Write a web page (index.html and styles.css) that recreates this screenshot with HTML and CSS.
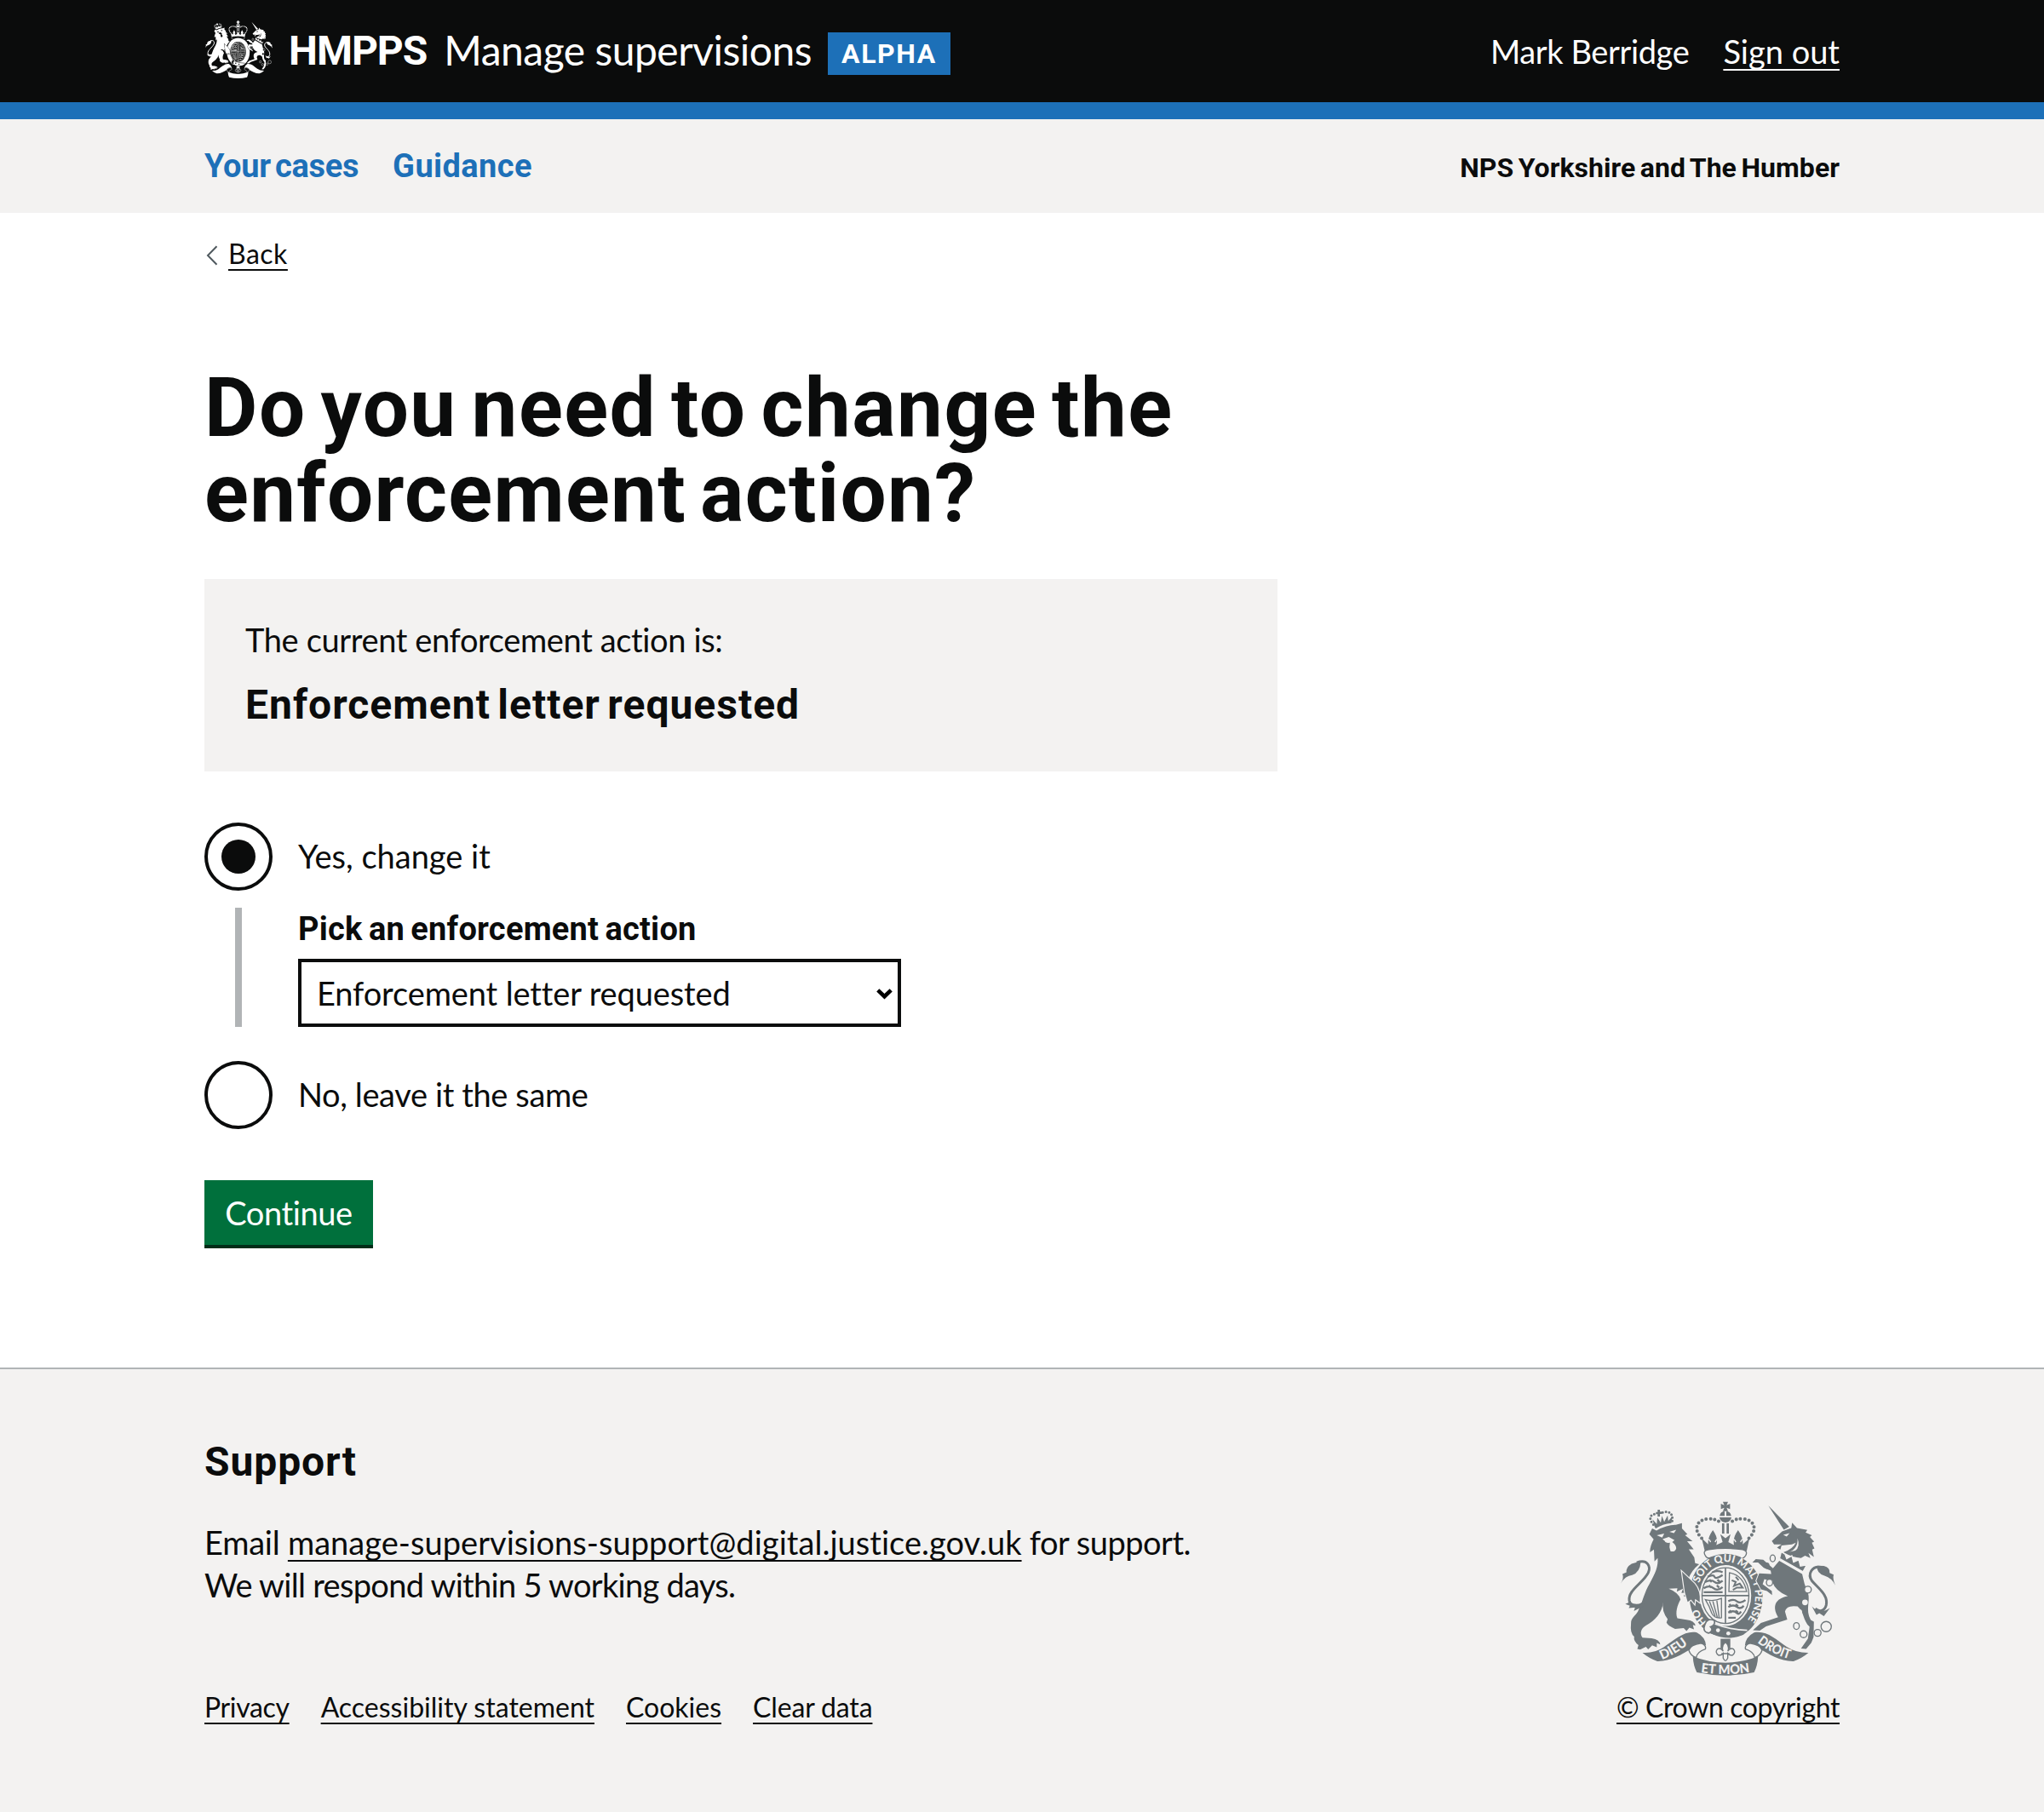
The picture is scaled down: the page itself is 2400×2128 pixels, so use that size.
FILE: index.html
```
<!DOCTYPE html>
<html lang="en">
<head>
<meta charset="utf-8">
<title>Do you need to change the enforcement action? - Manage supervisions</title>
<link rel="stylesheet" href="styles.css">
</head>
<body>
<svg class="defs" aria-hidden="true">
  <defs>
    <path id="ring-left" d="M373 496 A106 124 0 0 1 334 410"/>
    <path id="ring-top" d="M346 358 A103 119 0 0 1 440 283 A103 120 0 0 1 542 402 A103 122 0 0 1 494 508"/>
    <path id="scroll-left" d="M216 627 Q266 608 316 566"/>
    <path id="scroll-mid" d="M352 672 Q438 685 524 671"/>
    <path id="scroll-right" d="M549 567 Q603 610 668 627"/>
    <symbol id="crest" viewBox="72 70 750 614" preserveAspectRatio="none">
      <!-- lion's crown -->
      <g class="ink">
        <path d="M190 158 L183 134 L198 150 L200 128 L212 146 L216 122 L224 143 L236 120 L238 140 L252 124 L249 147 Q218 150 194 166Z"/>
        <path d="M201 100 h8 v7 h7 v8 h-7 v9 h-8 v-8 h-6 v-8 h6z"/>
      </g>
      <path class="beads" d="M186 152 C166 128 178 114 196 116 M252 140 C256 112 240 102 218 110" stroke-width="9" stroke-dasharray="0 11.5"/>
      <!-- lion -->
      <path class="ink" d="M172 186 L182 166 L197 173 Q235 152 265 153 L286 147 L286 166 L305 186 L297 190 L323 211 L304 211 L327 239 L310 239 L329 268 L332 288 L346 292 Q318 315 308 345 L334 372 L330 431 L318 416 L306 424 L303 408 L292 404 L298 392 L284 393 L290 378 L268 388 L270 376 L240 378 Q275 392 281 416 C270 435 262 462 270 482 L302 487 Q330 490 333 508 L324 505 L328 521 L312 515 L302 527 L292 516 L262 519 Q236 508 232 497 L236 485 Q214 455 220 424 C218 462 190 492 160 507 C142 518 138 535 148 550 L180 552 Q208 556 210 574 L198 569 L198 584 L182 577 L168 591 L160 582 L140 592 L130 590 L134 576 Q116 562 119 546 Q104 535 108 500 C108 480 120 478 132 458 C150 420 155 390 173 360 C192 325 204 300 201 270 L190 282 L188 240 L174 250 C174 232 180 218 187 204Z"/>
      <path class="paper" d="M198 190 L224 184 L217 198Z M242 178 L266 170 L258 182Z M218 203 L240 196 L260 207 L252 214 Q266 224 266 236 Q262 250 246 246 Q240 230 244 216 Q228 218 226 210Z"/>
      <path class="ink" d="M72 360 Q84 340 78 326 L92 320 Q90 302 110 290 Q125 286 142 282 Q140 320 112 330 Q88 332 72 360Z"/>
      <path class="line" d="M128 286 C166 272 178 300 168 322 C150 358 96 384 102 420 C108 446 140 446 160 424" stroke-width="9"/>
      <path class="ink" d="M88 432 L104 424 Q135 444 162 412 L150 440 L118 456 L122 444 L100 446 L104 438Z"/>
      <!-- royal crown -->
      <g class="ink">
        <path d="M429 72 h18 l-5 12 l12 -5 v19 l-12 -5 l5 12 h-18 l5 -12 l-12 5 v-19 l12 5z"/>
        <path d="M418 122 Q420 106 435 105 V122Z M441 105 Q456 106 458 122 H441Z M417 127 H459 Q456 143 438 145 Q420 143 417 127Z"/>
        <path d="M426 148 h8 v36 h-8z M442 148 h8 v36 h-8z"/>
        <path d="M355 200 L378 222 Q374 200 394 172 Q414 200 406 224 L428 214 L420 186 L438 200 L456 186 L448 214 L468 224 Q462 200 482 172 Q502 200 498 222 L522 200 L512 246 Q438 226 366 246Z"/>
      </g>
      <path class="rule" d="M372 206 q10 -6 14 8 M416 206 q-10 -6 -14 8 M460 206 q10 -6 14 8 M505 206 q-10 -6 -14 8" stroke-width="4"/>
      <path class="beads" d="M355 200 C326 172 334 138 374 132 Q404 130 418 144 M520 200 C550 172 542 138 502 132 Q472 130 458 144" stroke-width="12" stroke-dasharray="0 15"/>
      <!-- garter -->
      <path class="ink" d="M438 255 C510 255 568 320 568 402 C568 485 520 551 452 551 C370 551 312 485 312 402 C312 320 366 255 438 255Z"/>
      <path class="fold" d="M368 262 Q356 244 380 240 Q438 232 498 240 Q518 246 508 262 Q498 276 490 268 Q438 246 386 268 Q374 274 368 262Z" stroke-width="4"/>
      <ellipse class="paper" cx="438" cy="402" rx="90" ry="107"/>
      <g class="motto"><text><textPath href="#ring-left" textLength="58">HO</textPath></text><text><textPath href="#ring-top" textLength="392" lengthAdjust="spacingAndGlyphs">SOIT QUI MAL Y PENSE</textPath></text></g>
      <path class="limb" d="M286 318 L330 360 Q352 386 348 426 L332 414 L330 431 L318 416 L306 424 L296 390Z" stroke-width="7"/>
      <!-- unicorn -->
      <path class="ink" d="M588 86 L661 160 L642 170Z M600 210 L636 176 L668 164 L671 146 L688 164 L724 171 L718 180 L740 190 L733 196 L748 212 L740 216 L749 236 L741 240 L747 266 L728 252 L735 270 L716 262 L702 270 Q672 268 640 250 Q674 238 684 216 L670 222 L634 226 L630 240 L618 233 L634 222 L608 222Z"/>
      <path class="paper" d="M640 188 L662 182 L652 194Z M690 200 Q692 240 656 250 L682 244 Q700 230 690 200Z"/>
      <path class="limb" d="M626 280 L706 326 Q712 360 726 392 C736 420 716 452 736 488 L747 494 L746 548 L738 568 L720 590 L702 588 L726 554 L732 512 C708 490 714 460 690 440 Q652 434 646 458 L654 486 L580 510 L558 525 L534 524 L562 498 L622 478 C600 440 612 412 656 404 Q612 386 602 354 L574 344 L568 362 L600 386 L601 400 L583 386 L562 380 L546 350 L556 324 L598 326 L596 314 L572 304 L552 286 L532 286 L544 274 L570 276 L604 306Z" stroke-width="6"/>
      <path class="collar" d="M633 248 L646 256 L652 272 L670 262 L676 284 L694 276 L700 298 L722 294 L709 318 L627 272Z" stroke-width="4"/>
      <path class="ink" d="M822 366 Q812 342 816 328 L802 322 Q804 304 782 298 L758 297 Q756 324 784 332 Q810 340 822 366Z"/>
      <path class="line" d="M772 302 C740 296 724 326 740 350 C764 378 798 400 790 436 C784 458 766 460 752 448" stroke-width="9"/>
      <path class="ink" d="M740 440 Q768 470 803 446 L782 474 L766 464 L756 470Z"/>
      <g class="paper"><circle cx="726" cy="381" r="12"/><circle cx="716" cy="426" r="10"/><circle cx="695" cy="461" r="11"/><circle cx="592" cy="356" r="12"/></g>
      <g class="line" stroke-width="4"><ellipse cx="603" cy="271" rx="9" ry="12"/><ellipse cx="583" cy="297" rx="7" ry="9"/><ellipse cx="592" cy="356" rx="11" ry="12"/><circle cx="726" cy="381" r="12"/><ellipse cx="686" cy="509" rx="10" ry="12"/><circle cx="711" cy="538" r="12"/><circle cx="760" cy="533" r="12"/><circle cx="790" cy="511" r="18"/></g>
      <!-- shield -->
      <g class="line" stroke-width="4">
        <ellipse cx="438" cy="402" rx="82" ry="98"/>
        <path d="M438 304 V500 M356 402 H520" stroke-width="5"/>
        <path d="M376 336 q20 -10 24 0 t28 -6 M366 354 q22 -10 34 0 t28 -4 M362 376 q20 -12 34 0 t32 -4 M392 320 q20 -8 36 0 M382 346 l8 8 m20 -8 l8 8 M380 366 l8 8 m20 -8 l8 8 M362 390 h66" stroke-width="7"/>
        <path d="M448 422 q18 -10 30 0 t30 -4 M448 442 q18 -10 30 0 t24 -4 M448 462 q18 -10 28 0 t16 -4 M452 432 l6 8 m16 -8 l8 8 m-30 14 l8 8 m14 -8 l8 8 M448 480 h26" stroke-width="7"/>
        <path d="M452 322 Q500 330 512 388 H450Z"/>
        <path d="M460 348 l14 6 l-6 14 l20 -8 l10 14 l-20 0 l-14 8 M474 336 l10 12" stroke-width="6"/>
        <path d="M368 416 Q396 424 424 412 V480 Q400 484 390 464 Q382 438 368 416Z M382 422 L402 474 M394 422 L410 480 M408 420 L416 480"/>
      </g>
      <path class="ink" d="M376 508 Q430 530 512 528 L500 540 Q440 560 372 530Z"/>
      <path class="rule" d="M396 500 Q450 522 514 524" stroke-width="5"/>
      <g class="paper"><circle cx="412" cy="524" r="7"/><circle cx="448" cy="535" r="7"/></g>
      <path class="fold" d="M400 490 Q374 478 366 504 Q356 530 380 534 Q398 524 386 512 Q402 508 400 490Z" stroke-width="5"/>
      <!-- scroll -->
      <g class="ink">
        <path d="M148 603 Q190 606 222 584 C262 556 296 524 338 532 Q368 548 370 578 L352 570 Q326 572 322 586 C285 610 245 634 200 633 Q170 622 148 603Z"/>
        <path d="M728 603 Q686 604 652 582 C614 556 582 524 538 532 Q508 548 506 578 L524 570 Q548 572 554 586 C592 610 630 634 676 633 Q706 622 728 603Z"/>
        <path d="M324 616 Q380 638 438 638 Q496 638 552 616 Q550 650 538 672 Q438 694 338 672 Q326 650 324 616Z"/>
        <path d="M421 554 h34 v34 h-34z"/>
      </g>
      <path class="fold" d="M352 570 Q372 576 368 590 Q338 600 336 620 Q316 614 310 594 Q316 576 352 570Z M524 570 Q504 576 508 590 Q538 600 540 620 Q560 614 566 594 Q560 576 524 570Z" stroke-width="4"/>
      <path class="fold" d="M438 566 Q454 580 446 598 Q454 584 466 590 Q476 602 462 612 Q450 612 446 606 L446 622 Q438 640 430 622 L430 606 Q426 612 414 612 Q400 602 410 590 Q422 584 430 598 Q422 580 438 566Z M424 606 H452" stroke-width="4"/>
      <g class="words"><text><textPath href="#scroll-left" textLength="106" lengthAdjust="spacingAndGlyphs">DIEU</textPath></text><text><textPath href="#scroll-mid" textLength="172" lengthAdjust="spacingAndGlyphs">ET MON</textPath></text><text><textPath href="#scroll-right" textLength="126" lengthAdjust="spacingAndGlyphs">DROIT</textPath></text></g>
    </symbol>
  </defs>
</svg>

<header class="header">
  <div class="container header-row">
    <a class="brand" href="#">
      <svg class="crest-small" aria-hidden="true"><use href="#crest"/></svg>
      <strong class="org">HMPPS</strong>
      <span class="service">Manage supervisions</span>
      <strong class="phase">ALPHA</strong>
    </a>
    <div class="user">
      <span class="user-name">Mark Berridge</span>
      <a class="link" href="#">Sign out</a>
    </div>
  </div>
</header>

<nav class="primary-nav">
  <div class="container nav-row">
    <div class="nav-links">
      <a class="nav-cases" href="#">Your cases</a>
      <a class="nav-guidance" href="#">Guidance</a>
    </div>
    <strong class="region">NPS Yorkshire and The Humber</strong>
  </div>
</nav>

<main class="container main">
  <div class="back">
    <svg class="back-icon" viewBox="0 0 14 24" aria-hidden="true"><path d="M12.5 1.2 L2 12 L12.5 22.8"/></svg>
    <a class="link back-link" href="#">Back</a>
  </div>
  <h1 class="title"><span class="title-first">Do you need to change the</span> <span class="title-second">enforcement action?</span></h1>
  <section class="panel">
    <p class="panel-lead">The current enforcement action is:</p>
    <p class="panel-value">Enforcement letter requested</p>
  </section>
  <form class="form">
    <div class="choice">
      <span class="radio radio-checked"></span>
      <label class="choice-label">Yes, change it</label>
    </div>
    <div class="conditional">
      <label class="field-label" for="action">Pick an enforcement action</label>
      <div class="select-wrap">
        <select class="select" id="action"><option>Enforcement letter requested</option></select>
        <svg class="select-icon" viewBox="0 0 19 13" aria-hidden="true"><path d="M1.8 1.8 L9.5 9.2 L17.2 1.8"/></svg>
      </div>
    </div>
    <div class="choice">
      <span class="radio"></span>
      <label class="choice-label choice-no">No, leave it the same</label>
    </div>
    <button class="button" type="button">Continue</button>
  </form>
</main>

<footer class="footer">
  <div class="container footer-row">
    <div class="footer-main">
      <h2 class="support">Support</h2>
      <p class="contact"><span class="email-word">Email </span><a class="link email" href="#">manage-supervisions-support@digital.justice.gov.uk</a><span class="for-support"> for support.</span><br><span class="respond">We will respond within 5 working days.</span></p>
      <div class="meta">
        <a class="link privacy" href="#">Privacy</a>
        <a class="link" href="#">Accessibility statement</a>
        <a class="link" href="#">Cookies</a>
        <a class="link clear" href="#">Clear data</a>
      </div>
    </div>
    <div class="copyright">
      <svg class="crest-large" aria-hidden="true"><use href="#crest"/></svg>
      <a class="link crown" href="#">© Crown copyright</a>
    </div>
  </div>
</footer>
</body>
</html>
```
FILE: styles.css
```
* { box-sizing: border-box; }
body { margin: 0; background: #fff; color: #0b0c0c; font-family: Lato, "Noto Sans", sans-serif; font-size: 38px; line-height: 50px; font-variant-ligatures: none; }
h1, h2, p { margin: 0; }
a { color: inherit; text-decoration: none; white-space: nowrap; }
span, strong, label { white-space: nowrap; }
.defs { position: absolute; width: 0; height: 0; }
.container { width: 1920px; margin: 0 auto; }
.link { text-decoration: underline; text-decoration-thickness: 2px; text-underline-offset: 6px; text-decoration-skip-ink: none; }

.header { height: 140px; background: #0b0c0c; color: #fff; border-bottom: 20px solid #1d70b8; }
.header-row { display: flex; justify-content: space-between; align-items: flex-start; }
.brand { display: flex; align-items: flex-start; }
.crest-small { width: 79px; height: 68px; margin: 24px 0 0 1px; --ink: #fff; --paper: #0b0c0c; --lettering: none; }
.crest-small, .crest-large { display: block; }
.org { margin: 30px 20px 0 19px; font: 700 48px/60px Roboto, sans-serif; letter-spacing: -1px; }
.service { margin-top: 29px; font-size: 48px; line-height: 60px; letter-spacing: -0.5px; }
.phase { margin: 38px 0 0 19px; padding: 0 16px; width: 144px; background: #1d70b8; font: 700 32px/50px Roboto, sans-serif; letter-spacing: 1.6px; }
.user { display: flex; gap: 40px; padding-top: 35px; }
.user-name { letter-spacing: -0.38px; }

.primary-nav { height: 110px; background: #f3f2f1; }
.nav-row { display: flex; justify-content: space-between; padding-top: 30px; }
.nav-links { display: flex; gap: 40px; color: #1d70b8; font: 700 38px/50px Roboto, sans-serif; }
.nav-cases { letter-spacing: -0.3px; word-spacing: -4px; }
.nav-guidance { letter-spacing: 0.4px; }
.region { padding-top: 2px; font: 700 32px/50px Roboto, sans-serif; letter-spacing: 0.05px; word-spacing: -2.5px; }

.main { padding-top: 28px; }
.back { display: flex; align-items: center; height: 40px; font-size: 32px; line-height: 40px; }
.back-icon { width: 14px; height: 24px; margin: 4px 12px 0 2px; fill: none; stroke: #505a5f; stroke-width: 2; }
.back-link { letter-spacing: 0.5px; }
.title { margin-top: 111px; font: 700 96px/100px Roboto, sans-serif; }
.title-first, .title-second { display: block; }
.title-first { letter-spacing: 1.5px; word-spacing: -8.4px; }
.title-second { letter-spacing: 1.3px; word-spacing: -9px; }
.panel { width: 1260px; height: 226px; margin-top: 51px; padding: 46px 48px 0; background: #f3f2f1; }
.panel-lead { letter-spacing: -0.36px; }
.panel-value { margin-top: 22px; font: 700 48px/60px Roboto, sans-serif; letter-spacing: 1px; word-spacing: -4.5px; }

.form { margin-top: 60px; }
.choice { display: flex; gap: 30px; height: 80px; }
.choice-label { padding-top: 14px; }
.choice-no { letter-spacing: -0.38px; }
.radio { display: grid; place-items: center; width: 80px; height: 80px; border: 4px solid #0b0c0c; border-radius: 50%; }
.radio-checked::before { content: ""; width: 40px; height: 40px; border-radius: 50%; background: #0b0c0c; }
.conditional { height: 140px; margin: 20px 0 40px 36px; padding-left: 66px; border-left: 8px solid #b1b4b6; }
.field-label { display: block; font: 700 38px/50px Roboto, sans-serif; letter-spacing: 0.22px; word-spacing: -2.3px; }
.select-wrap { position: relative; width: 708px; height: 80px; margin-top: 10px; }
.select { display: block; width: 100%; height: 80px; padding: 0 18px; border: 4px solid #0b0c0c; border-radius: 0; appearance: none; background: #fff; color: #0b0c0c; font: 400 38px/50px Lato, sans-serif; letter-spacing: -0.12px; }
.select-icon { position: absolute; right: 10px; top: 35px; width: 19px; height: 13px; fill: none; stroke: #000; stroke-width: 4.6; }
.button { display: block; width: 198px; height: 76px; margin-top: 60px; padding: 0; border: 0; background: #00703c; box-shadow: 0 4px 0 #002d18; color: #fff; font: 400 38px/50px Lato, sans-serif; letter-spacing: -0.4px; }

.footer { height: 522px; margin-top: 144px; background: #f3f2f1; border-top: 2px solid #b1b4b6; }
.footer-row { display: flex; justify-content: space-between; }
.footer-main { padding-top: 79px; }
.support { font: 700 48px/60px Roboto, sans-serif; letter-spacing: 0.9px; }
.contact { margin-top: 39px; }
.email-word { letter-spacing: -0.25px; }
.email { letter-spacing: 0.04px; }
.for-support { letter-spacing: -0.5px; }
.respond { letter-spacing: -0.7px; }
.meta { display: flex; gap: 37px; margin-top: 99px; font-size: 32px; line-height: 40px; }
.privacy { letter-spacing: -0.35px; }
.clear { letter-spacing: -0.15px; }
.copyright { padding-top: 155px; }
.crest-large { width: 252px; height: 205px; margin: 0 0 17px 5px; --ink: #6f777b; --paper: #f3f2f1; --lettering: inline; }
.crown { display: block; font-size: 32px; line-height: 40px; letter-spacing: -0.38px; }

.ink { fill: var(--ink); }
.paper { fill: var(--paper); }
.line { fill: none; stroke: var(--ink); }
.rule { fill: none; stroke: var(--paper); }
.fold { fill: var(--paper); stroke: var(--ink); }
.collar { fill: var(--ink); stroke: var(--paper); }
.limb { fill: var(--ink); stroke: var(--paper); paint-order: stroke; }
.beads { fill: none; stroke: var(--ink); stroke-linecap: round; }
.motto, .words { display: var(--lettering); fill: var(--paper); font-family: Lato, sans-serif; font-weight: 900; }
.motto { font-size: 37px; }
.words { font-size: 46px; }
```
